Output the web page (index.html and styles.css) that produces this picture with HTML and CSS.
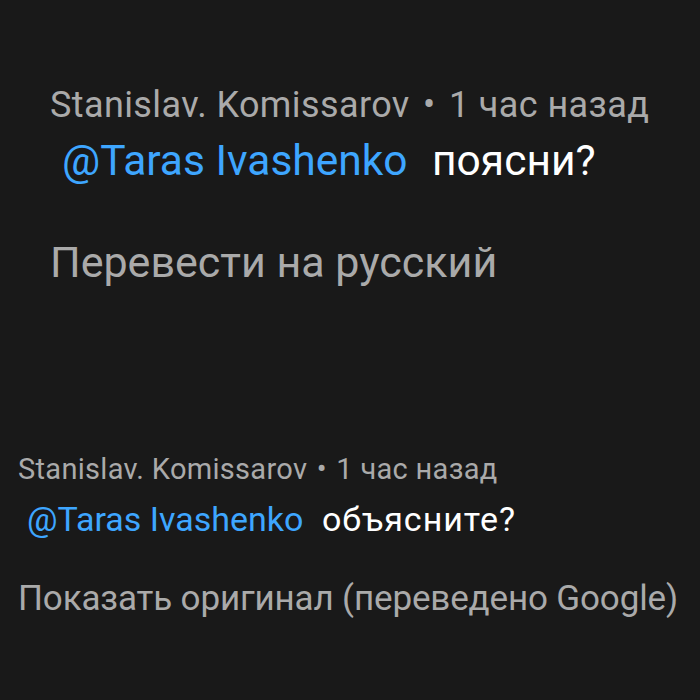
FILE: index.html
```html
<!DOCTYPE html>
<html>
<head>
<meta charset="utf-8">
<link rel="stylesheet" href="styles.css">
</head>
<body>
<div class="page">
  <section class="comment comment-big">
    <div class="meta">Stanislav. Komissarov <span class="dot">•</span> 1 час назад</div>
    <div class="text"><span class="mention">@Taras Ivashenko</span> <span class="body">поясни?</span></div>
    <div class="action">Перевести на русский</div>
  </section>
  <section class="comment comment-small">
    <div class="meta">Stanislav. Komissarov <span class="dot">•</span> 1 час назад</div>
    <div class="text"><span class="mention">@Taras Ivashenko</span> <span class="body">объясните?</span></div>
    <div class="action">Показать оригинал (переведено Google)</div>
  </section>
</div>
</body>
</html>
```
FILE: styles.css
```css
html, body {
  margin: 0;
  padding: 0;
  background: #191919;
}
.page {
  width: 700px;
  height: 700px;
  overflow: hidden;
  font-family: Roboto, "Noto Sans", sans-serif;
  color: #aaaaaa;
}
.meta, .text, .action {
  white-space: nowrap;
}
.mention { color: #3ea6ff; }
.body { color: #ffffff; }

.comment-big {
  padding: 83px 0 0 50px;
}
.comment-big .meta {
  font-size: 36px;
  line-height: 44px;
  letter-spacing: 0.4px;
}
.comment-big .meta .dot { margin: 0 4px; }
.comment-big .text {
  font-size: 42.5px;
  line-height: 50px;
  margin-top: 9px;
  padding-left: 12px;
}
.comment-big .text .body { margin-left: 14px; }
.comment-big .action {
  font-size: 43px;
  line-height: 50px;
  margin-top: 51px;
}

.comment-small {
  margin-top: 164px;
  padding-left: 18px;
}
.comment-small .meta {
  font-size: 29px;
  line-height: 36px;
  letter-spacing: 0.3px;
}
.comment-small .meta .dot { margin: 0 2px; }
.comment-small .text {
  font-size: 34px;
  line-height: 40px;
  margin-top: 12px;
  padding-left: 9px;
}
.comment-small .text .body {
  margin-left: 10px;
  letter-spacing: 1px;
}
.comment-small .action {
  font-size: 35px;
  line-height: 42px;
  margin-top: 39px;
  letter-spacing: -0.15px;
}
```
